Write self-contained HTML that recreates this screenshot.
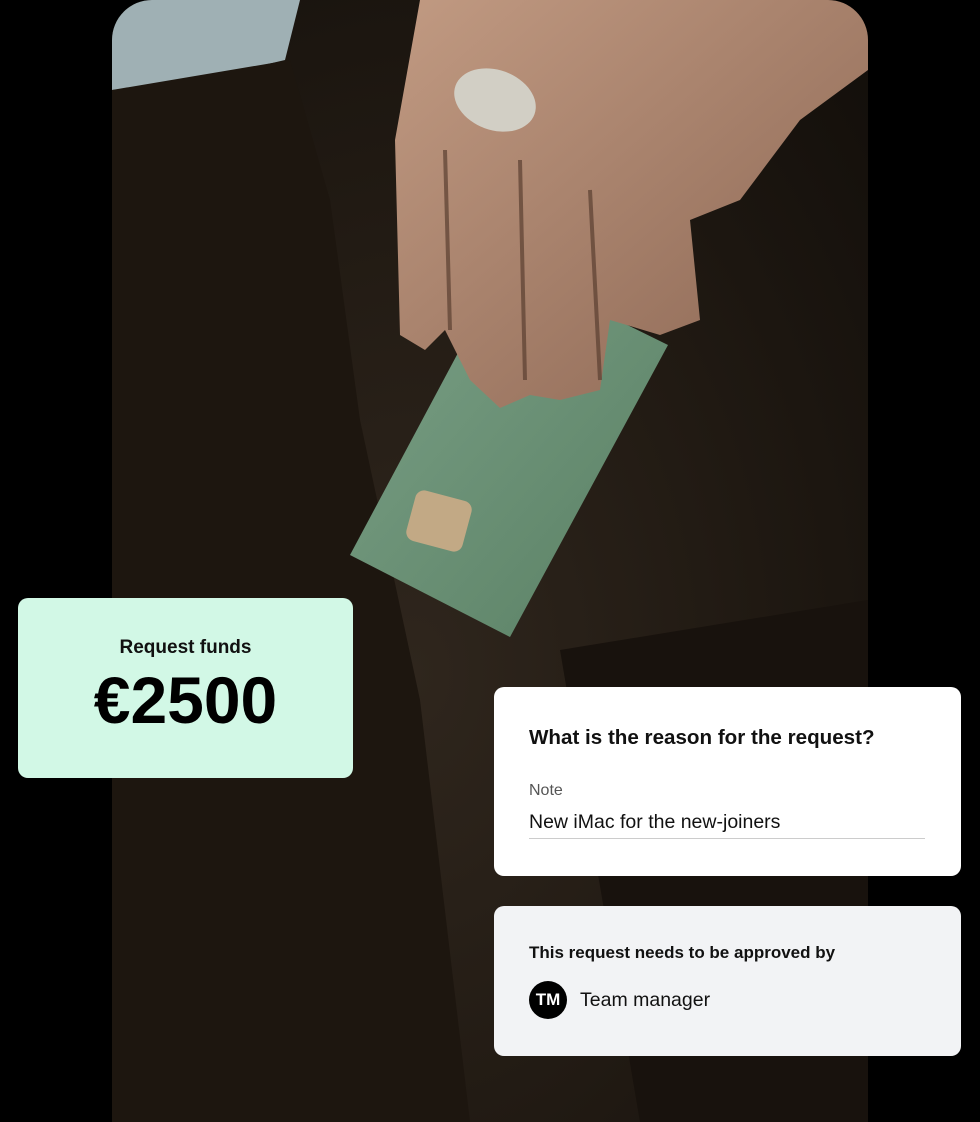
<!DOCTYPE html>
<html><head><meta charset="utf-8"><style>
*{margin:0;padding:0;box-sizing:border-box}
body{width:980px;height:1122px;background:#000;position:relative;overflow:hidden;font-family:"Liberation Sans",sans-serif}
.photo{position:absolute;left:112px;top:0;width:756px;height:1122px;border-radius:40px 40px 0 0;overflow:hidden;background:radial-gradient(ellipse at 40% 60%,#2f261d 0%,#211a13 50%,#120e0a 100%)}
.card{position:absolute;border-radius:10px}
</style></head><body>
<div class="photo">
<svg width="756" height="1122" viewBox="112 0 756 1122" xmlns="http://www.w3.org/2000/svg">
<defs>
<linearGradient id="sk" x1="0" y1="0" x2="1" y2="1"><stop offset="0" stop-color="#c19a82"/><stop offset="1" stop-color="#8a6552"/></linearGradient>
<linearGradient id="gc" x1="0" y1="0" x2="1" y2="1"><stop offset="0" stop-color="#7aa086"/><stop offset="1" stop-color="#5a8064"/></linearGradient>
</defs>
<path d="M112 0 H300 L285 60 L200 80 L112 90 Z" fill="#9fb0b4"/>
<path d="M112 90 L290 60 L330 200 L360 420 L420 700 L470 1122 H112 Z" fill="#1d160f"/>
<path d="M560 650 L868 600 V1122 H640 Z" fill="#18120d"/>
<path d="M350 555 L510 637 L668 345 L505 265 Z" fill="url(#gc)"/>
<rect x="410" y="495" width="58" height="52" rx="9" fill="#c2a985" transform="rotate(15 439 521)"/>
<path d="M420 0 L395 140 L400 335 L425 350 L445 330 L470 380 L500 408 L530 395 L560 400 L600 390 L610 320 L660 335 L700 320 L690 220 L740 200 L800 120 L868 70 V0 Z" fill="url(#sk)"/>
<ellipse cx="495" cy="100" rx="42" ry="30" fill="#d2cfc5" transform="rotate(20 495 100)"/>
<path d="M445 150 L450 330 M520 160 L525 380 M590 190 L600 380" stroke="#5a3f30" stroke-width="4" fill="none" opacity=".7"/>
</svg>
</div>
<div class="card" style="left:18px;top:598px;width:335px;height:180px;background:#d2f8e6;text-align:center">
<div style="margin-top:39px;font-size:19px;font-weight:bold;color:#111">Request funds</div>
<div style="margin-top:8px;font-size:66px;font-weight:bold;color:#000;line-height:66px">€2500</div>
</div>
<div class="card" style="left:494px;top:687px;width:467px;height:189px;background:#fff">
<div style="position:absolute;left:35px;top:39px;font-size:20.6px;font-weight:bold;color:#111">What is the reason for the request?</div>
<div style="position:absolute;left:35px;top:95px;font-size:16px;color:#555">Note</div>
<div style="position:absolute;left:35px;top:124px;font-size:19.5px;color:#111">New iMac for the new-joiners</div>
<div style="position:absolute;left:35px;top:151px;width:396px;height:1px;background:#ccc"></div>
</div>
<div class="card" style="left:494px;top:906px;width:467px;height:150px;background:#f2f3f5">
<div style="position:absolute;left:35px;top:37px;font-size:17px;font-weight:bold;color:#111">This request needs to be approved by</div>
<div style="position:absolute;left:35px;top:75px;width:38px;height:38px;border-radius:50%;background:#000;color:#fff;font-weight:bold;font-size:17px;line-height:38px;text-align:center">TM</div>
<div style="position:absolute;left:86px;top:83px;font-size:19.5px;color:#111">Team manager</div>
</div>
</body></html>
